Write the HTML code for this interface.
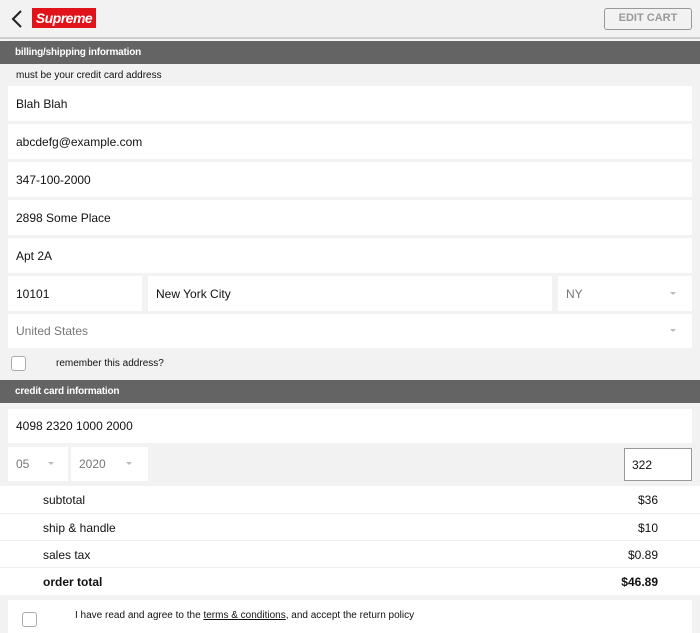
<!DOCTYPE html>
<html><head><style>
*{box-sizing:border-box;margin:0;padding:0}
body{width:700px;height:633px;overflow:hidden;background:#f2f2f2;font-family:"Liberation Sans",Arial,sans-serif;color:#111;position:relative}
.a{position:absolute}
.hdr{left:0;top:0;width:700px;height:39px;border-bottom:2px solid #ccc;background:#f2f2f2}
.bar{left:0;width:700px;height:23px;background:#646464;color:#fff;font-weight:bold;font-size:10px;padding:6px 0 0 15px;letter-spacing:-0.2px}
.f{background:#fff;font-size:12px;padding-left:8px;display:flex;align-items:center}
.g{color:#777}
.arr{position:absolute;right:16px;top:50%;margin-top:-2px;width:0;height:0;border-left:3px solid transparent;border-right:3px solid transparent;border-top:3px solid #bbb}
.row{left:0;width:700px;background:#fff;font-size:12px;border-bottom:1px solid #eee}
.row span{position:absolute;left:43px;top:7px}
.row b,.row i{position:absolute;right:42px;top:7px;font-style:normal}
.cb{width:15px;height:15px;border:1px solid #aaa;border-radius:3px;background:#fff}
</style></head><body>
<div class="a hdr"></div>
<svg class="a" style="left:10px;top:9px" width="14" height="20"><path d="M11 2 L3 10 L11 18" stroke="#222" stroke-width="2" fill="none"/></svg>
<div class="a" style="left:32px;top:8px;width:64px;height:20px;background:#e0131b;color:#fff;font-weight:bold;font-style:italic;font-size:14px;text-align:center;line-height:20px;letter-spacing:-0.5px">Supreme</div>
<div class="a" style="left:604px;top:8px;width:88px;height:22px;border:1.5px solid #999;border-radius:3px;color:#999;font-weight:bold;font-size:11px;text-align:center;line-height:19px">EDIT CART</div>
<div class="a bar" style="top:41px">billing/shipping information</div>
<div class="a" style="left:16px;top:70px;font-size:10px">must be your credit card address</div>
<div class="a f" style="left:8px;top:86px;width:684px;height:35px">Blah Blah</div>
<div class="a f" style="left:8px;top:124px;width:684px;height:35px">abcdefg@example.com</div>
<div class="a f" style="left:8px;top:162px;width:684px;height:35px">347-100-2000</div>
<div class="a f" style="left:8px;top:200px;width:684px;height:35px">2898 Some Place</div>
<div class="a f" style="left:8px;top:238px;width:684px;height:35px">Apt 2A</div>
<div class="a f" style="left:8px;top:276px;width:134px;height:35px">10101</div>
<div class="a f" style="left:148px;top:276px;width:404px;height:35px">New York City</div>
<div class="a f g" style="left:558px;top:276px;width:134px;height:35px">NY<div class="arr"></div></div>
<div class="a f g" style="left:8px;top:314px;width:684px;height:34px">United States<div class="arr"></div></div>
<div class="a cb" style="left:11px;top:356px"></div>
<div class="a" style="left:56px;top:358px;font-size:10px">remember this address?</div>
<div class="a bar" style="top:380px">credit card information</div>
<div class="a f" style="left:8px;top:409px;width:684px;height:34px">4098 2320 1000 2000</div>
<div class="a f g" style="left:8px;top:447px;width:60px;height:34px">05<div class="arr" style="right:14px"></div></div>
<div class="a f g" style="left:71px;top:447px;width:77px;height:34px">2020<div class="arr" style="right:16px"></div></div>
<div class="a f" style="left:624px;top:448px;width:68px;height:33px;border:1px solid #999;padding-left:7px">322</div>
<div class="a row" style="top:486px;height:28px"><span>subtotal</span><i>$36</i></div>
<div class="a row" style="top:514px;height:27px"><span>ship &amp; handle</span><i>$10</i></div>
<div class="a row" style="top:541px;height:27px"><span>sales tax</span><i>$0.89</i></div>
<div class="a row" style="top:568px;height:27px;border:none"><span style="font-weight:bold">order total</span><b>$46.89</b></div>
<div class="a" style="left:8px;top:600px;width:684px;height:33px;background:#fff"></div>
<div class="a cb" style="left:22px;top:612px"></div>
<div class="a" style="left:75px;top:610px;font-size:10px">I have read and agree to the <u>terms &amp; conditions</u>, and accept the return policy</div>
</body></html>
